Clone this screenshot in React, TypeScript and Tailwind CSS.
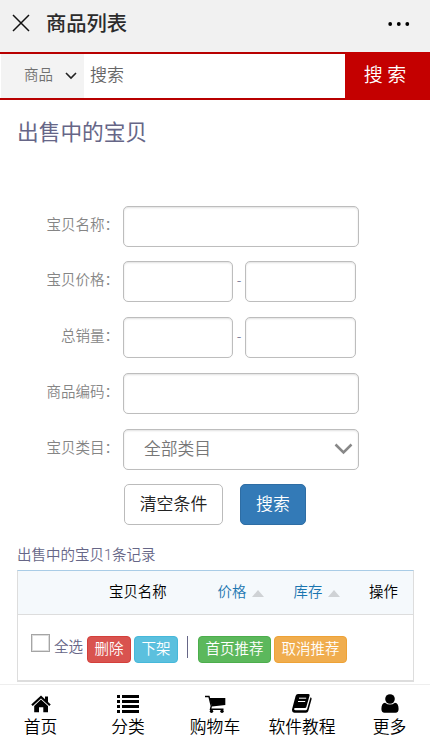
import React from 'react';

interface FieldRowProps {
  label: string;
  children: React.ReactNode;
}

const inputClass =
  'h-[41px] rounded-[5px] border border-[#bdbdbd] bg-white px-3 text-[16px] shadow-[inset_0_1px_2px_rgba(0,0,0,0.12)] outline-none';

const FieldRow: React.FC<FieldRowProps> = ({ label, children }) => (
  <div className="flex h-[41px]">
    <label className="mr-[4px] w-[119px] pt-[9px] text-right text-[14.5px] leading-[21px] font-[350] text-[#858585]">
      {label}
    </label>
    {children}
  </div>
);

const RangeInputs: React.FC = () => (
  <div className="flex items-center">
    <input type="text" className={`${inputClass} w-[110px]`} />
    <span className="w-[12px] text-center text-[14.5px] text-[#666687]">-</span>
    <input type="text" className={`${inputClass} w-[110.5px]`} />
  </div>
);

const SortArrow: React.FC = () => (
  <svg className="ml-[6px] h-[7px] w-[12px]" viewBox="0 0 12 7" fill="#cfd2d5">
    <path d="M6 0L12 7H0z" />
  </svg>
);

const HomeIcon = () => (
  <svg width="20" height="18" viewBox="0 0 20 18">
    <path d="M10 4.4L17 11V17.3H12.3V12.2H8V17.3H3.2V11z" />
    <path d="M1 10.3L10 2L19 10.3" fill="none" stroke="#000" strokeWidth="2.2" />
    <path d="M14 1.6H17V8.5L14 5.6z" />
  </svg>
);

const ListIcon = () => (
  <svg width="22" height="18" viewBox="0 0 22 18">
    <path d="M0 0h3v3H0zM5 0h17v3H5zM0 5h3v3H0zM5 5h17v3H5zM0 10h3v3H0zM5 10h17v3H5zM0 15h3v3H0zM5 15h17v3H5z" />
  </svg>
);

const CartIcon = () => (
  <svg width="21" height="18" viewBox="0 0 21 18">
    <path d="M4.3 3H20.3V10L7 11.5z" />
    <path d="M0 1.5H4L6.3 11L5.5 14.3H18.5" fill="none" stroke="#000" strokeWidth="1.4" />
    <circle cx="6.5" cy="16.3" r="1.7" />
    <circle cx="17" cy="16.3" r="1.7" />
  </svg>
);

const BookIcon = () => (
  <svg width="20" height="19" viewBox="0 0 20 19">
    <path d="M6 0H16.5Q18 0 17.6 1.5L14.3 13Q14 14 13 14H3.5Q2 14 2 15T3.5 16.3H14L15 15.5L18.5 3.3Q20 4 19.6 5L16.3 17Q15.8 18.8 14 18.8H2.7Q0 18.8 0 15.5L3.6 2Q4.2 0 6 0z" />
    <path d="M7 4.2H14.2M6 7.5H13.2" stroke="#fff" strokeWidth="1" />
  </svg>
);

const UserIcon = () => (
  <svg width="18" height="19" viewBox="0 0 18 19">
    <circle cx="9" cy="5" r="4.8" />
    <path d="M4 8.7Q9 12.5 14 8.7Q17.6 9.2 17.6 15Q17.6 18.7 14.5 18.7H3.5Q.4 18.7 .4 15Q.4 9.2 4 8.7z" />
  </svg>
);

const tabs = [
  { name: '首页', icon: <HomeIcon />, width: 'w-[81px]' },
  { name: '分类', icon: <ListIcon />, width: 'w-[94px]' },
  { name: '购物车', icon: <CartIcon />, width: 'w-[80px]' },
  { name: '软件教程', icon: <BookIcon />, width: 'w-[94px]' },
  { name: '更多', icon: <UserIcon />, width: 'w-[81px]' },
];

const smallButton = 'h-[27px] rounded-[4px] border text-[14.5px] leading-[25px] text-white whitespace-nowrap';

const App: React.FC = () => {
  return (
    <div
      lang="zh-CN"
      className="flex h-[738px] w-[430px] flex-col overflow-hidden bg-white font-['Roboto','Noto_Sans_CJK_SC',sans-serif] font-[350] text-[#666687]"
    >
      <header className="flex h-[52px] shrink-0 items-center bg-[#f1f1f1] pb-[6px] pl-[12px] text-black">
        <svg width="18" height="18" viewBox="0 0 18 18" fill="none" stroke="#111" strokeWidth="1.5">
          <path d="M1 1L17 17M17 1L1 17" />
        </svg>
        <h1 className="mt-[2px] ml-[16px] text-[20.3px] leading-[28px] font-medium text-[#2b2b2b]">商品列表</h1>
        <svg className="mt-px mr-[20px] ml-auto" width="22" height="4" viewBox="0 0 22 4">
          <circle cx="2.2" cy="2" r="1.9" />
          <circle cx="10.8" cy="2" r="1.9" />
          <circle cx="19.3" cy="2" r="1.9" />
        </svg>
      </header>

      <div className="flex h-[48px] shrink-0 border-y-2 border-[#b80000] bg-white">
        <div className="flex w-[84px] items-center border-l border-white bg-[#f3f3f3] pl-[23px] text-[14.5px] text-[#707070]">
          商品
          <svg className="ml-[12px]" width="12" height="8" viewBox="0 0 12 8" fill="none" stroke="#222" strokeWidth="1.6">
            <path d="M1 1L6 6L11 1" />
          </svg>
        </div>
        <input
          type="text"
          placeholder="搜索"
          className="min-w-0 flex-1 pb-[1px] pl-[6px] text-[17px] outline-none placeholder:text-[#666]"
        />
        <button type="button" className="-my-[2px] w-[85px] bg-[#c40000] pr-[5px] text-[19px] text-white">
          搜 索
        </button>
      </div>

      <main className="flex-1 px-[17px]">
        <h2 className="mt-[17px] text-[21.7px] leading-[32px] font-normal">出售中的宝贝</h2>

        <form className="-ml-[17px] mt-[56.5px] flex flex-col gap-[14.75px]">
          <FieldRow label="宝贝名称：">
            <input type="text" className={`${inputClass} w-[236px]`} />
          </FieldRow>
          <FieldRow label="宝贝价格：">
            <RangeInputs />
          </FieldRow>
          <FieldRow label="总销量：">
            <RangeInputs />
          </FieldRow>
          <FieldRow label="商品编码：">
            <input type="text" className={`${inputClass} w-[236px]`} />
          </FieldRow>
          <FieldRow label="宝贝类目：">
            <div className={`${inputClass} flex w-[236px] items-center justify-between`}>
              <span className="mt-[2px] pl-[8px] text-[16.8px] font-[350] text-[#777]">全部类目</span>
              <svg className="-mr-[7px]" width="19" height="12" viewBox="0 0 19 12" fill="none" stroke="#888" strokeWidth="2.5">
                <path d="M1.5 1.5L9.5 9.5L17.5 1.5" />
              </svg>
            </div>
          </FieldRow>
          <div className="ml-[124px] flex gap-[17px] text-[16.9px]">
            <button type="button" className="h-[41px] w-[99px] rounded-[5px] border border-[#bbb] pb-[1px] text-[#222]">
              清空条件
            </button>
            <button type="button" className="h-[41px] w-[66px] rounded-[5px] border border-[#2e6da4] bg-[#337ab7] pb-[1px] text-white">
              搜索
            </button>
          </div>
        </form>

        <p className="mt-[20px] text-[14.5px] leading-[21px]">出售中的宝贝1条记录</p>

        <div className="mt-[4px] h-[112px] w-[397px] border-x border-b-2 border-t border-[#ddd] border-t-[#a9cce6]">
          <div className="flex h-[44px] items-center border-b border-[#ddd] bg-[#f5f9fc] pt-px text-[14.4px] text-black">
            <div className="ml-[91px] w-[108.5px]">宝贝名称</div>
            <div className="flex w-[76px] items-center text-[#1a75b0]">
              价格
              <SortArrow />
            </div>
            <div className="flex w-[75.5px] items-center text-[#1a75b0]">
              库存
              <SortArrow />
            </div>
            <div className="whitespace-nowrap">操作</div>
          </div>
          <div className="flex h-[65px] items-center pl-[13px] text-[14.5px]">
            <span className="mb-[9px] h-[18px] w-[19px] border border-[#a5a5a5] bg-white shadow-[inset_0_0_0_1px_#ddd]" />
            <span className="mt-px ml-[4px] w-[30px] whitespace-nowrap">全选</span>
            <button type="button" className={`${smallButton} ml-[3px] mt-[3px] w-[44px] border-[#d43f3a] bg-[#d9534f]`}>
              删除
            </button>
            <button type="button" className={`${smallButton} ml-[3px] mt-[3px] w-[44px] border-[#46b8da] bg-[#5bc0de]`}>
              下架
            </button>
            <span className="mb-[2px] ml-[9px] h-[22px] w-px bg-[#666687]" />
            <button type="button" className={`${smallButton} ml-[10px] mt-[3px] w-[73px] border-[#4cae4c] bg-[#5cb85c]`}>
              首页推荐
            </button>
            <button type="button" className={`${smallButton} ml-[3px] mt-[3px] w-[73px] border-[#eea236] bg-[#f0ad4e]`}>
              取消推荐
            </button>
          </div>
        </div>
      </main>

      <nav className="flex h-[54px] shrink-0 border-t border-[#eee] bg-white text-[16.8px] text-black">
        {tabs.map((tab) => (
          <a key={tab.name} className={`${tab.width} flex flex-col items-center whitespace-nowrap`}>
            <span className="flex h-[29px] shrink-0 items-end pb-[1px]">{tab.icon}</span>
            <span className="leading-[26px]">{tab.name}</span>
          </a>
        ))}
      </nav>
    </div>
  );
};

export default App;
